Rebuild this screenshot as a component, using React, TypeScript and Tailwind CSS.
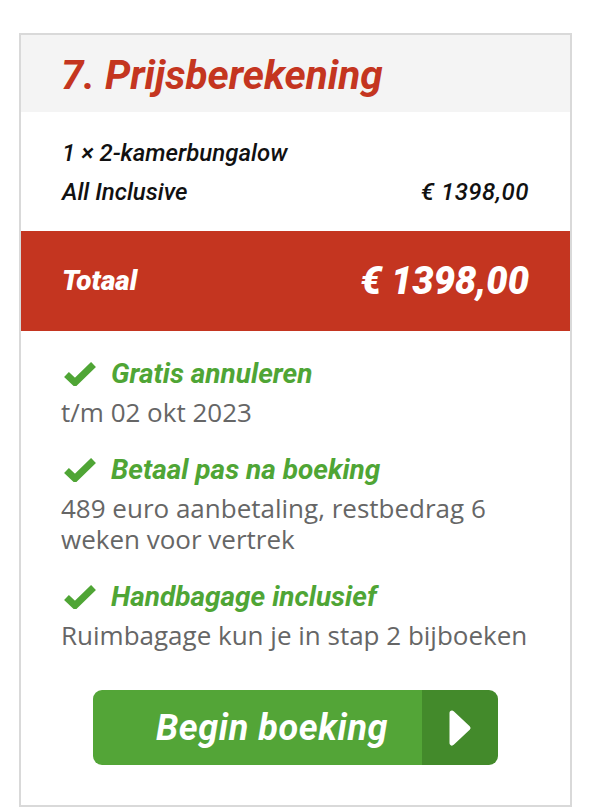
import React from "react";

const Check = () => (
  <svg width="32" height="24" viewBox="0 0 32 24" className="shrink-0">
    <path d="M2.5 12.5 L11 20.5 L29.5 2.5" fill="none" stroke="#4fa535" strokeWidth="7" strokeLinecap="butt" strokeLinejoin="miter" />
  </svg>
);

const Feature = ({ title, lines }: { title: string; lines: string[] }) => (
  <div className="flex flex-col">
    <div className="flex items-center h-[32px]">
      <div className="w-[50px] pl-[3px] flex items-center">
        <Check />
      </div>
      <span
        className="text-[28px] leading-[32px] font-bold italic text-[#4fa535]"
        style={{ fontFamily: "Roboto, 'Liberation Sans', sans-serif" }}
      >
        {title}
      </span>
    </div>
    <div
      className="mt-[7px] text-[26px] leading-[31px] text-[#666666]"
      style={{ fontFamily: "'Open Sans', 'Liberation Sans', sans-serif" }}
    >
      {lines.map((l) => (
        <div key={l}>{l}</div>
      ))}
    </div>
  </div>
);

export default function App() {
  const heading = { fontFamily: "Roboto, 'Liberation Sans', sans-serif" };
  return (
    <div className="w-[590px] h-[810px] bg-white pt-[33px] pl-[19px]">
      <div className="w-[553px] h-[774px] border-2 border-[#d9d9d9] flex flex-col bg-white">
        <div className="h-[77px] bg-[#f4f4f4] px-[40px] flex items-center">
          <h1
            className="text-[40.5px] leading-none font-bold italic text-[#c43520] mt-[3px]"
            style={heading}
          >
            7. Prijsberekening
          </h1>
        </div>
        <div
          className="px-[41px] pt-[21px] pb-[20px] text-[24px] font-medium italic text-[#111111]"
          style={heading}
        >
          <div className="h-[39px] flex items-center">1 × 2-kamerbungalow</div>
          <div className="h-[39px] flex items-center justify-between">
            <span>All Inclusive</span>
            <span className="tracking-[0.5px]">€ 1398,00</span>
          </div>
        </div>
        <div
          className="h-[100px] bg-[#c43520] px-[41px] flex items-center justify-between text-white font-black italic"
          style={heading}
        >
          <span className="text-[28px]">Totaal</span>
          <span className="text-[38px]">€ 1398,00</span>
        </div>
        <div className="px-[40px] pt-[27px] flex flex-col gap-[26px]">
          <Feature title="Gratis annuleren" lines={["t/m 02 okt 2023"]} />
          <Feature
            title="Betaal pas na boeking"
            lines={["489 euro aanbetaling, restbedrag 6", "weken voor vertrek"]}
          />
          <Feature
            title="Handbagage inclusief"
            lines={["Ruimbagage kun je in stap 2 bijboeken"]}
          />
        </div>
        <div className="flex justify-center mt-[39px]">
          <button className="w-[405px] h-[75px] rounded-[9px] overflow-hidden flex">
            <div
              className="flex-1 bg-[#53a537] flex items-center justify-center pl-[29px] text-white text-[36px] font-bold italic tracking-[0.6px]"
              style={heading}
            >
              Begin boeking
            </div>
            <div className="w-[76px] bg-[#438a2b] flex items-center justify-center">
              <svg width="24" height="38" viewBox="0 0 24 38">
                <path d="M4 4 L20 19 L4 34 Z" fill="white" stroke="white" strokeWidth="5" strokeLinejoin="round" />
              </svg>
            </div>
          </button>
        </div>
      </div>
    </div>
  );
}
